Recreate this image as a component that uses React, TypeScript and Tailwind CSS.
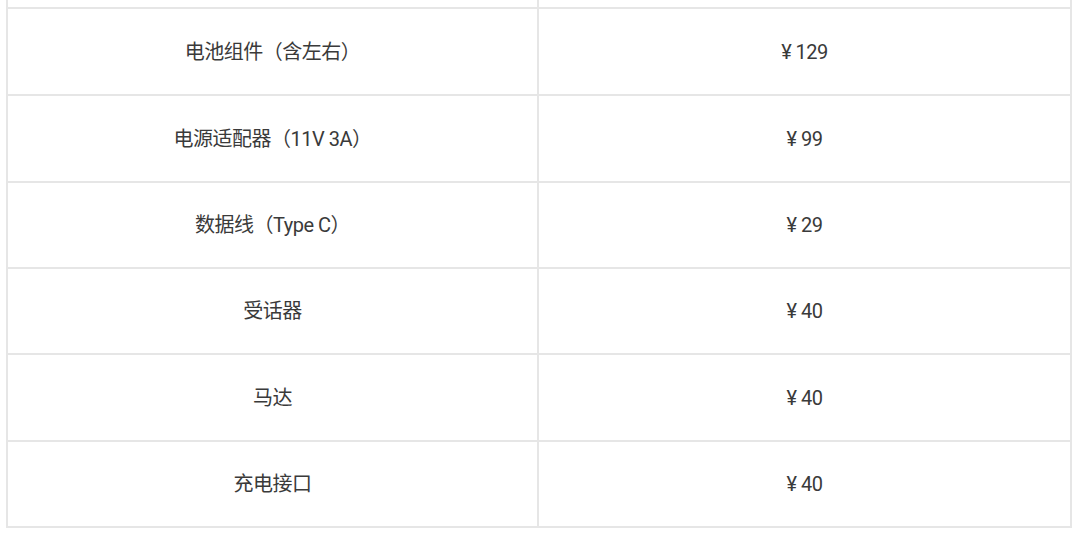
import React from 'react';

const rows = [
  { name: '电池组件（含左右）', price: '¥ 129', h: 'h-[87px]' },
  { name: '电源适配器（11V 3A）', price: '¥ 99', h: 'h-[87px]' },
  { name: '数据线（Type C）', price: '¥ 29', h: 'h-[86px]' },
  { name: '受话器', price: '¥ 40', h: 'h-[86px]' },
  { name: '马达', price: '¥ 40', h: 'h-[87px]' },
  { name: '充电接口', price: '¥ 40', h: 'h-[86px]' },
];

export default function App() {
  return (
    <div className="w-[1080px] h-[535px] bg-white overflow-hidden" style={{ fontFamily: 'Roboto, "Noto Sans CJK SC", sans-serif' }}>
      <div className="ml-[6px] w-[1066px] border-x-2 border-b-2 border-[#e6e6e6]">
        {/* previous row, cut off by the top edge */}
        <div className="grid grid-cols-[531px_1fr] h-[7px]">
          <div className="border-r-2 border-[#e6e6e6]" />
          <div />
        </div>
        {rows.map((r) => (
          <div key={r.name} className={`grid grid-cols-[531px_1fr] border-t-2 border-[#e6e6e6] ${r.h}`}>
            <div className="flex items-center justify-center border-r-2 border-[#e6e6e6] text-[20px] tracking-[-0.5px] text-[#3a3a3a]">
              {r.name}
            </div>
            <div className="flex items-center justify-center text-[20px] tracking-[-0.5px] text-[#3a3a3a]">
              {r.price}
            </div>
          </div>
        ))}
      </div>
    </div>
  );
}
